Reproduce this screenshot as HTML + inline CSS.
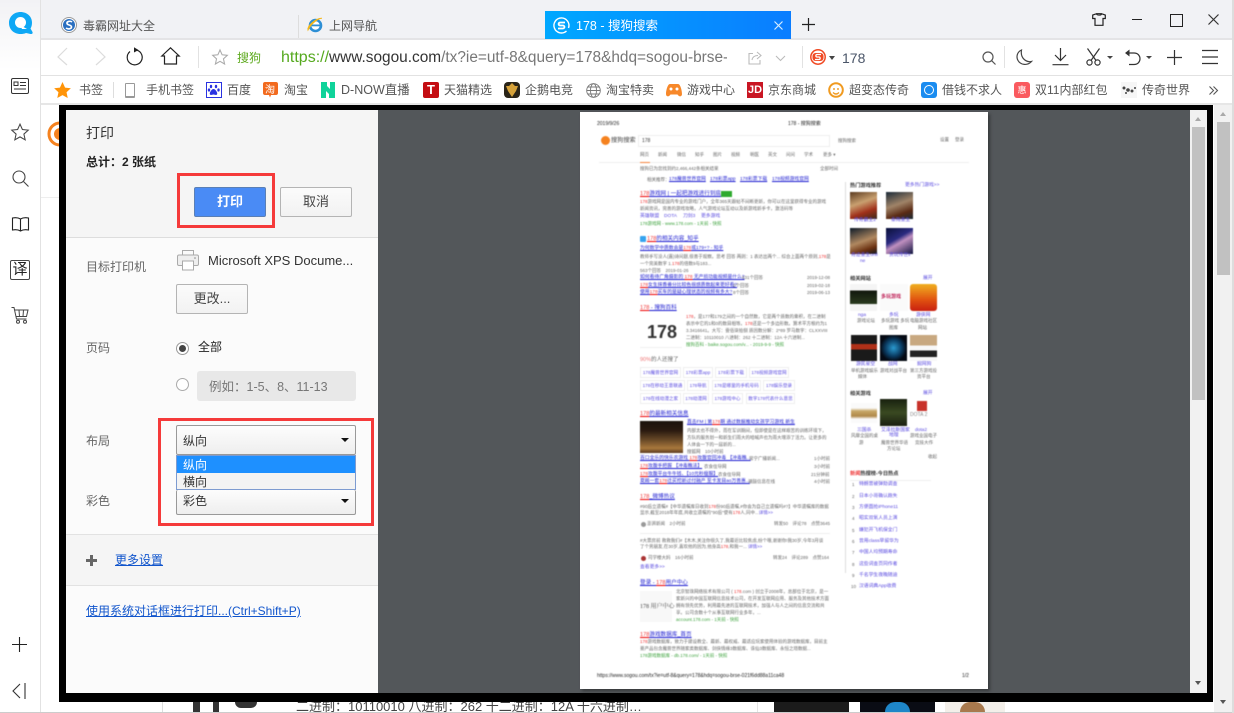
<!DOCTYPE html>
<html lang="zh"><head><meta charset="utf-8"><title>178 - 搜狗搜索</title>
<style>
html,body{margin:0;padding:0;width:1234px;height:713px;overflow:hidden;background:#fff}
body{position:relative;font-family:"Liberation Sans","Noto Sans CJK SC",sans-serif;color:#333}
.a{position:absolute}
.t{position:absolute;line-height:0;white-space:nowrap}
svg{position:absolute;overflow:visible}
.b{font-size:12px;color:#555}
.btn{position:absolute;box-sizing:border-box;background:linear-gradient(#fbfbfb,#f2f2f2);border:1px solid #b4b4b4;border-radius:2px;font-size:13px;color:#444;text-align:center}
.sel{position:absolute;box-sizing:border-box;left:176px;width:180px;background:linear-gradient(#fdfdfd,#eee);border:1px solid #999;border-radius:2px}
.l{font-size:12px;color:#666}
#m{position:absolute;left:0;top:0;width:1234px;height:713px;filter:blur(.45px);overflow:hidden;pointer-events:none}
#m .t{font-size:4.500px;color:#666}
#m .h{font-size:5.600px;color:#1a1ad0;text-decoration:underline;text-decoration-thickness:1px;text-underline-offset:1px}
#m .h i{color:#e33;font-style:normal;text-decoration:underline;text-decoration-color:#e00;text-decoration-thickness:1px;text-underline-offset:1px}
#m .g{color:#3fa33f}
#m .k{font-size:4.800px;color:#5b4ce0}
#m .s{font-size:5.200px;color:#333;font-weight:bold}
#m .c{position:absolute;box-sizing:border-box;border:1px solid #eee;background:#fff;height:11px;line-height:9px;font-size:4.600px;color:#5b4ce0;text-align:center;white-space:nowrap}
</style></head><body>

<!-- chrome backgrounds -->
<div class="a" style="left:0;top:0;width:1234px;height:38px;background:#f1f2f5"></div>
<div class="a" style="left:0;top:38px;width:1234px;height:2px;background:#e4e4e6"></div>
<div class="a" style="left:0;top:75px;width:1234px;height:1px;background:#e2e2e2"></div>
<div class="a" style="left:0;top:103px;width:1234px;height:2px;background:#e6e6e6"></div>
<div class="a" style="left:0;top:0;width:40px;height:713px;background:linear-gradient(#f2f2f5 0,#fff 70px)"></div>
<div class="a" style="left:40px;top:0;width:1px;height:713px;background:#e2e2e2"></div>
<div class="a" style="left:41px;top:197px;width:18px;height:1px;background:#eee"></div>
<div class="a" style="left:0;top:712px;width:1234px;height:1px;background:#ccc"></div>
<div class="a" style="left:1232px;top:0;width:2px;height:713px;background:#ddd"></div>

<!-- app logo -->
<svg style="left:8px;top:11px" width="26" height="24" viewBox="0 0 26 24"><path d="M12.500 1C19 1 24 5.500 24 11.500C24 14 23.500 16 22.500 17.500L24.500 21C25 22.500 24 23.300 22.500 23L18 22C16.500 22.700 14.500 23 12.500 23C5.500 23 1 18 1 12C1 5.500 6 1 12.500 1Z" fill="#0fa8f5"/><circle cx="12.500" cy="11.500" r="5.500" fill="#fff"/><path d="M12 14L19 18L14 18Z" fill="#fff"/></svg>

<!-- tabs -->
<svg style="left:61px;top:17px" width="16" height="16" viewBox="0 0 16 16"><circle cx="8" cy="8" r="7.500" fill="#fff" stroke="#999"/><circle cx="8" cy="8" r="6" fill="#2a6fc0"/><path d="M11 5C9 3.500 5.500 4.500 6 6.500C6.500 8.500 10.500 7.500 10.500 10C10.500 12 7 12.500 5 11" fill="none" stroke="#fff" stroke-width="1.600"/></svg>
<div class="t" style="left:83px;top:26px;font-size:12px;letter-spacing:0;color:#555">毒霸网址大全</div>
<div class="a" style="left:298px;top:15px;width:1px;height:23px;background:#ddd"></div>
<svg style="left:307px;top:17px" width="17" height="16" viewBox="0 0 17 16"><circle cx="8.500" cy="8.500" r="5.500" fill="#fff" stroke="#2d8fd5" stroke-width="2.600"/><rect x="4" y="7.500" width="9" height="1.800" fill="#2d8fd5"/><path d="M1 13C0 9 9 1 15 1.200C11 1 4 7 1 13Z" fill="#f3b71c" stroke="#f3b71c"/></svg>
<div class="t" style="left:329px;top:26px;font-size:12px;color:#555">上网导航</div>
<div class="a" style="left:545px;top:11px;width:246px;height:28px;background:linear-gradient(90deg,#00a8ff,#0a7dff)"></div>
<svg style="left:553px;top:17px" width="17" height="17" viewBox="0 0 17 17"><path d="M13.500 14A7.500 7.500 0 1 1 15.500 11" fill="none" stroke="#fff" stroke-width="1.400"/><path d="M12 5.500H7.500C5 5.500 5 8.500 7.500 8.500H9.800C12 8.500 12 11.500 9.800 11.500H5" fill="none" stroke="#fff" stroke-width="1.800"/></svg>
<div class="t" style="left:576px;top:26px;font-size:12.500px;color:#fff">178 - 搜狗搜索</div>
<svg style="left:773px;top:20px" width="11" height="11"><path d="M1.500 1.500L9.500 9.500M9.500 1.500L1.500 9.500" stroke="#d5ecff" stroke-width="1.200"/></svg>
<svg style="left:802px;top:18px" width="13" height="13"><path d="M6.500 0V13M0 6.500H13" stroke="#222" stroke-width="1.200"/></svg>

<svg style="left:1092px;top:13px" width="14" height="13" viewBox="0 0 14 13"><path d="M4.500 .7H9.500C9.500 2.500 4.500 2.500 4.500 .7ZM4.500 .7L.7 2V5.500H3V12.300H11V5.500H13.300V2L9.500 .7" fill="none" stroke="#222" stroke-width="1.200"/></svg>
<div class="a" style="left:1132px;top:19px;width:10px;height:1px;background:#222"></div>
<div class="a" style="left:1170px;top:14px;width:11px;height:11px;border:1.300px solid #222;box-sizing:content-box"></div>
<svg style="left:1208px;top:14px" width="11" height="11"><path d="M.5 .5L10.500 10.500M10.500 .5L.5 10.500" stroke="#333" stroke-width="1.200"/></svg>

<!-- toolbar -->
<svg style="left:57px;top:47px" width="50" height="20" fill="none" stroke="#dcdcdc" stroke-width="1.200"><path d="M10 1L1 10L10 18"/><path d="M39 1L48 10L39 18"/></svg>
<svg style="left:126px;top:47px" width="18" height="19" viewBox="0 0 18 19" fill="none"><path d="M11 3.200A7.500 7.500 0 1 1 4 4.500" stroke="#222" stroke-width="1.200"/><path d="M8 .3L12.500 3L8 5.500Z" fill="#222"/></svg>
<svg style="left:161px;top:47px" width="19" height="18" fill="none" stroke="#222" stroke-width="1.200"><path d="M.8 9L9.500 .8L18.200 9H15.500V17H3.500V9Z"/></svg>
<div class="a" style="left:198px;top:46px;width:1px;height:22px;background:#e2e2e2"></div>
<svg style="left:212px;top:49px" width="16" height="16" viewBox="0 0 24 24"><path d="M12 1.500L15.200 8.700L23 9.500L17.200 14.800L18.900 22.500L12 18.500L5.100 22.500L6.800 14.800L1 9.500L8.800 8.700Z" fill="none" stroke="#aaa" stroke-width="1.600"/></svg>
<div class="t" style="left:237px;top:58px;font-size:12px;color:#5eaa1f">搜狗</div>
<div class="a" style="left:281px;top:46px;width:446px;height:24px;overflow:hidden"><div class="t" style="left:0;top:12px;font-size:15.400px;color:#777"><span style="color:#55a91e;font-size:16px">https://</span><span style="color:#333">www.sogou.com</span>/tx?ie=utf-8&amp;query=178&amp;hdq=sogou-brse-021f6dd88a11ca48</div></div>
<svg style="left:748px;top:51px" width="14" height="14" fill="none" stroke="#bbb" stroke-width="1.100"><path d="M5 2.500H1V13H12V9"/><path d="M4 9C4.500 6 7 4.500 10 4.500M9 1L13 4.500L9 8"/></svg>
<svg style="left:775px;top:55px" width="11" height="7" fill="none" stroke="#bbb" stroke-width="1.100"><path d="M1 1L5.500 5.500L10 1"/></svg>
<div class="a" style="left:802px;top:46px;width:1px;height:22px;background:#e2e2e2"></div>
<svg style="left:810px;top:49px" width="16" height="16" viewBox="0 0 16 16"><circle cx="8" cy="8" r="7.200" fill="none" stroke="#f04a24" stroke-width="1.500"/><rect x="2.500" y="4" width="11" height="8" rx="3" fill="#f04a24"/><path d="M11 5.500H7C5.500 5.500 5.500 8 7 8H9C10.500 8 10.500 10.500 9 10.500H5" fill="none" stroke="#fff" stroke-width="1.300"/></svg>
<div class="a" style="left:829px;top:56px;border:3.500px solid transparent;border-top:4px solid #444;border-bottom:0"></div>
<div class="t" style="left:842px;top:58px;font-size:14px;color:#4a5568">178</div>
<svg style="left:982px;top:51px" width="14" height="14" fill="none" stroke="#555" stroke-width="1.200"><circle cx="6" cy="6" r="5"/><path d="M9.800 9.800L13.500 13.500"/></svg>
<div class="a" style="left:1004px;top:46px;width:1px;height:22px;background:#e2e2e2"></div>
<svg style="left:1016px;top:49px" width="16" height="17" viewBox="0 0 16 17" fill="none" stroke="#444" stroke-width="1.200"><path d="M5.500 1C1 3 0 8 2 11.500C4.500 16 11.500 17 15.500 12.500C11 13.500 4 10 5.500 1Z"/></svg>
<svg style="left:1052px;top:48px" width="17" height="18" fill="none" stroke="#333" stroke-width="1.200"><path d="M8.500 0V12M3 7L8.500 12.500L14 7M.5 16.700H16.500"/></svg>
<svg style="left:1086px;top:48px" width="15" height="18" fill="none" stroke="#333" stroke-width="1.200"><circle cx="3.500" cy="14.500" r="2.600"/><circle cx="11.500" cy="14.500" r="2.600"/><path d="M1.500 .5L10 12.500M13.500 .5L5 12.500"/></svg>
<div class="a" style="left:1107px;top:56px;border:3px solid transparent;border-top:3.500px solid #444;border-bottom:0"></div>
<svg style="left:1124px;top:48px" width="18" height="18" fill="none" stroke="#333" stroke-width="1.200"><path d="M3 5H10C18 5 18 16.500 10 16.500H5"/><path d="M5.500 1.500L1 5L5.500 8.500Z" fill="#333" stroke="none"/></svg>
<div class="a" style="left:1146px;top:56px;border:3px solid transparent;border-top:3.500px solid #444;border-bottom:0"></div>
<svg style="left:1167px;top:50px" width="15" height="15" stroke="#333" stroke-width="1.200"><path d="M7.500 0V15M0 7.500H15"/></svg>
<svg style="left:1202px;top:50px" width="16" height="14" stroke="#333" stroke-width="1.200"><path d="M0 .5H16M0 7H16M0 13.500H16"/></svg>

<!-- bookmarks -->
<svg style="left:54px;top:82px" width="17" height="16" viewBox="0 0 24 23"><path d="M12 0L15.700 8L24 8.900L17.800 14.700L19.500 23L12 18.800L4.500 23L6.200 14.700L0 8.900L8.300 8Z" fill="#ff9408"/></svg>
<div class="t b" style="left:79px;top:90px">书签</div>
<div class="a" style="left:113px;top:82px;width:1px;height:16px;background:#ddd"></div>
<div class="a" style="left:125px;top:83px;width:10px;height:15px;box-sizing:border-box;border:1.500px solid #999;border-radius:1px;border-bottom-width:2px"></div>
<div class="t b" style="left:146px;top:90px">手机书签</div>
<svg style="left:206px;top:82px" width="16" height="16" viewBox="0 0 16 16"><rect x=".5" y=".5" width="15" height="15" fill="#fff" stroke="#2932e1"/><g fill="#2932e1"><ellipse cx="5" cy="4.500" rx="1.200" ry="1.700"/><ellipse cx="10" cy="4.500" rx="1.200" ry="1.700"/><ellipse cx="3" cy="8" rx="1.200" ry="1.600"/><ellipse cx="12.500" cy="8" rx="1.200" ry="1.600"/><path d="M7.500 7C9.500 7 12 11 11 12.500C10 13.500 9 12.500 7.500 12.500C6 12.500 5 13.500 4 12.500C3 11 5.500 7 7.500 7Z"/></g></svg>
<div class="t b" style="left:227px;top:90px">百度</div>
<svg style="left:263px;top:82px" width="15" height="16"><path d="M2 0H13C14.200 0 15 .8 15 2V11C15 12.200 14.200 13 13 13H8L7 15.500L6 13H2C.8 13 0 12.200 0 11V2C0 .8 .8 0 2 0Z" fill="#f26a1e"/><text x="2" y="11" font-size="10" fill="#fff">淘</text></svg>
<div class="t b" style="left:284px;top:90px">淘宝</div>
<svg style="left:321px;top:82px" width="14" height="16"><path d="M0 0H6V4L9 7V0H14V16H8V12L5 9V16H0Z" fill="#10d39a"/></svg>
<div class="t b" style="left:341px;top:90px;font-size:12.500px">D-NOW直播</div>
<div class="a" style="left:423px;top:82px;width:16px;height:16px;background:#c40d12;border-radius:2px;color:#fff;font:bold 13px/16px 'Liberation Sans';text-align:center">T</div>
<div class="t b" style="left:444px;top:90px">天猫精选</div>
<div class="a" style="left:504px;top:82px;width:16px;height:16px;background:#2a2418;border-radius:4px"></div>
<svg style="left:506px;top:83px" width="12" height="14"><path d="M6 0L9 3L12 3L10 8L6 14L2 8L0 3L3 3Z" fill="#d6a23a"/></svg>
<div class="t b" style="left:525px;top:90px">企鹅电竞</div>
<svg style="left:586px;top:83px" width="15" height="15" fill="none" stroke="#777" stroke-width=".9"><circle cx="7.500" cy="7.500" r="6.800"/><ellipse cx="7.500" cy="7.500" rx="3" ry="6.800"/><path d="M.7 7.500H14.300M1.800 4H13.200M1.800 11H13.200"/></svg>
<div class="t b" style="left:606px;top:90px">淘宝特卖</div>
<svg style="left:666px;top:83px" width="16" height="14"><path d="M4 1H12C14.500 1 16 8 16 11C16 14 13 14 11.500 11.500H4.500C3 14 0 14 0 11C0 8 1.500 1 4 1Z" fill="#f7882a"/><circle cx="5" cy="6" r="1.500" fill="#fff"/><circle cx="11" cy="6" r="1.500" fill="#fff"/></svg>
<div class="t b" style="left:687px;top:90px">游戏中心</div>
<div class="a" style="left:747px;top:82px;width:16px;height:16px;background:#c91623;color:#fff;font:bold 11px/16px 'Liberation Sans';text-align:center">JD</div>
<div class="t b" style="left:768px;top:90px">京东商城</div>
<svg style="left:828px;top:82px" width="16" height="16" fill="none" stroke="#f09a20" stroke-width="2"><circle cx="8" cy="8" r="6.800"/><path d="M6 6V8M10 6V8M5 10.500C7 12.500 9 12.500 11 10.500" stroke-width="1.400"/></svg>
<div class="t b" style="left:849px;top:90px">超变态传奇</div>
<div class="a" style="left:921px;top:82px;width:16px;height:16px;background:#1a8cf0;border-radius:3px"></div>
<div class="a" style="left:924px;top:85px;width:8px;height:8px;border:1.500px solid #fff;border-radius:50%"></div>
<div class="t b" style="left:942px;top:90px">借钱不求人</div>
<div class="a" style="left:1014px;top:82px;width:16px;height:16px;background:#fa5a5f;border-radius:3px;color:#fff;font-size:9px;line-height:16px;text-align:center">惠</div>
<div class="t b" style="left:1035px;top:90px;font-size:12px">双11内部红包</div>
<div class="a" style="left:1121px;top:82px;width:16px;height:16px;background:#f6f6f6"></div>
<svg style="left:1122px;top:85px" width="14" height="10" fill="#444"><circle cx="2" cy="3" r="1.500"/><circle cx="6" cy="5" r="1.800"/><circle cx="10" cy="6" r="1.500"/><circle cx="13" cy="3" r="1"/><circle cx="4" cy="8" r="1"/></svg>
<div class="t b" style="left:1142px;top:90px">传奇世界</div>
<svg style="left:1209px;top:86px" width="9" height="9" fill="none" stroke="#555" stroke-width="1.100"><path d="M.5 .5L4.500 4.500L.5 8.500M4.500 .5L8.500 4.500L4.500 8.500"/></svg>

<!-- sidebar -->
<svg style="left:11px;top:78px" width="18" height="16" fill="none" stroke="#333" stroke-width="1"><rect x=".5" y=".5" width="17" height="15" rx="1.500"/><rect x="3" y="4" width="4" height="3.500"/><path d="M9 4.500H15M9 7.500H15M3 11H15"/></svg>
<svg style="left:11px;top:123px" width="18" height="18" viewBox="0 0 24 24"><path d="M12 1.500L15.200 8.700L23 9.500L17.200 14.800L18.900 22.500L12 18.500L5.100 22.500L6.800 14.800L1 9.500L8.800 8.700Z" fill="none" stroke="#444" stroke-width="1.400"/></svg>
<svg style="left:12px;top:170px" width="17" height="17" fill="none" stroke="#444" stroke-width="1.100"><circle cx="7" cy="7" r="6"/><path d="M11.500 11.500L16.500 16.500"/></svg>
<svg style="left:12px;top:217px" width="17" height="15" fill="none" stroke="#222" stroke-width="1.100"><path d="M8.500 2C6 .5 3 .5 .5 1V13C3 12.500 6 12.500 8.500 14C11 12.500 14 12.500 16.500 13V1C14 .5 11 .5 8.500 2V14"/></svg>
<div class="a" style="left:10px;top:260px;width:20px;height:20px;box-sizing:border-box;border:1px solid #444;border-radius:2px;font-size:15px;line-height:17px;text-align:center;color:#222">译</div>
<svg style="left:11px;top:307px" width="18" height="17" fill="none" stroke="#444" stroke-width="1"><path d="M.5 .5H3L5.500 12H15.500M3.500 3H17L15.500 9.500H4.800M8 3L8.500 9.500M12.500 3L12 9.500"/><circle cx="7" cy="14.800" r="1.500"/><circle cx="14" cy="14.800" r="1.500"/></svg>
<svg style="left:12px;top:637px" width="15" height="15" stroke="#222" stroke-width="1.100"><path d="M7.500 0V15M0 7.500H15"/></svg>
<svg style="left:12px;top:683px" width="14" height="16" fill="none" stroke="#333" stroke-width="1.100"><path d="M8 1L1 8L8 15M13 0V16"/></svg>

<!-- page behind -->
<svg style="left:49px;top:122px" width="10" height="24"><path d="M11 1A11 11 0 0 0 11 23" fill="none" stroke="#f5821f" stroke-width="3"/><circle cx="11" cy="12" r="6" fill="#f5821f"/></svg>
<div class="a" style="left:162px;top:702px;width:1px;height:10px;background:#ddd"></div>
<div class="t" style="left:296px;top:707px;font-size:13px;color:#444">二进制：10110010 八进制：262 十二进制：12A 十六进制…</div>
<div class="a" style="left:193px;top:702px;width:7px;height:10px;background:#333"></div>
<div class="a" style="left:213px;top:702px;width:6px;height:10px;background:#333"></div>
<div class="a" style="left:235px;top:702px;width:22px;height:6px;background:#333;border-radius:0 0 11px 11px"></div>
<div class="a" style="left:757px;top:702px;width:1px;height:10px;background:#e5e5e5"></div>
<div class="a" style="left:774px;top:702px;width:75px;height:10px;background:#1b1b1b"></div>
<div class="a" style="left:860px;top:702px;width:75px;height:10px;background:#0a0c14"></div>
<div class="a" style="left:885px;top:702px;width:25px;height:10px;border-radius:12px 12px 0 0;background:#1e86c8"></div>
<div class="a" style="left:945px;top:702px;width:60px;height:10px;background:#f3efe9"></div>
<div class="a" style="left:960px;top:702px;width:25px;height:10px;background:#a8794d;border-radius:14px 14px 0 0"></div>
<!-- main scrollbar -->
<div class="a" style="left:1214px;top:105px;width:18px;height:607px;background:#f1f1f1"></div>
<div class="a" style="left:1217px;top:122px;width:13px;height:153px;background:#c1c1c1"></div>
<div class="a" style="left:1220px;top:112px;border:3.500px solid transparent;border-bottom:4px solid #a9a9a9;border-top:0"></div>
<div class="a" style="left:1220px;top:700px;border:3.500px solid transparent;border-top:4px solid #555;border-bottom:0"></div>

<!-- black frame -->
<div class="a" style="left:59px;top:105px;width:1154px;height:597px;background:#000"></div>
<div class="a" style="left:66px;top:110px;width:1141px;height:583px;background:#53575a"></div>

<!-- print panel -->
<div class="a" style="left:66px;top:110px;width:312px;height:583px;background:#fbfbfb"></div>
<div class="a" style="left:66px;top:110px;width:312px;height:127px;background:#f5f5f5"></div>
<div class="a" style="left:66px;top:237px;width:312px;height:1px;background:#ddd"></div>
<div class="a" style="left:66px;top:534px;width:312px;height:52px;background:#f5f5f5;border-top:1px solid #e2e2e2;border-bottom:1px solid #e2e2e2;box-sizing:border-box"></div>
<div class="t" style="left:86px;top:133px;font-size:14px;color:#333">打印</div>
<div class="t" style="left:86px;top:162px;font-size:12px;color:#222;font-weight:bold">总计：2 张纸</div>
<div class="a" style="left:177px;top:173px;width:98px;height:55px;box-sizing:border-box;border:3px solid #f53a3a"></div>
<div class="btn" style="left:194px;top:187px;width:72px;height:30px;background:#4a8bf5;border-color:#5a7fb5;color:#fff;font-weight:bold;line-height:27px">打印</div>
<div class="btn" style="left:280px;top:187px;width:72px;height:30px;line-height:27px">取消</div>
<div class="t l" style="left:86px;top:267px">目标打印机</div>
<svg style="left:177px;top:250px" width="23" height="21" fill="#fafafa" stroke="#aaa"><path d="M5.500 5V.5H16.500V5" /><rect x=".5" y="5" width="21" height="10.500" rx="1.500" fill="#eee"/><rect x="5.500" y="11" width="11" height="9" fill="#fff"/><circle cx="18" cy="8" r=".8" fill="#888" stroke="none"/></svg>
<div class="t" style="left:208px;top:261px;font-size:13px;color:#333">Microsoft XPS Docume...</div>
<div class="btn" style="left:176px;top:284px;width:72px;height:30px;line-height:28px">更改...</div>
<div class="t l" style="left:86px;top:348px">页码</div>
<div class="a" style="left:176px;top:342px;width:13px;height:13px;box-sizing:border-box;border:1px solid #999;border-radius:50%;background:#fff"></div>
<div class="a" style="left:179px;top:345px;width:7px;height:7px;border-radius:50%;background:#444"></div>
<div class="t" style="left:198px;top:347px;font-size:12px;color:#222">全部</div>
<div class="a" style="left:176px;top:378px;width:13px;height:13px;box-sizing:border-box;border:1px solid #aaa;border-radius:50%;background:#fff"></div>
<div class="a" style="left:197px;top:371px;width:159px;height:30px;border-radius:3px;background:#e8e8e8"></div>
<div class="t" style="left:209px;top:387px;font-size:12.500px;color:#777">例如：1-5、8、11-13</div>
<div class="t l" style="left:86px;top:441px">布局</div>
<div class="t l" style="left:86px;top:501px">彩色</div>
<div class="a" style="left:158px;top:418px;width:216px;height:108px;box-sizing:border-box;border:3px solid #f53a3a"></div>
<div class="sel" style="top:425px;height:30px"></div>
<div class="t" style="left:183px;top:441px;font-size:12px;color:#333">纵向</div>
<div class="a" style="left:341px;top:438px;border:4px solid transparent;border-top:4.500px solid #111;border-bottom:0"></div>
<div class="sel" style="top:490px;height:25px;border-top:0"></div>
<div class="t" style="left:183px;top:501px;font-size:12px;color:#333">彩色</div>
<div class="a" style="left:341px;top:499px;border:4px solid transparent;border-top:4.500px solid #111;border-bottom:0"></div>
<div class="a" style="left:176px;top:455px;width:180px;height:35px;box-sizing:border-box;border:1px solid #7d9bd0;background:#f3f3f3"></div>
<div class="a" style="left:177px;top:456px;width:178px;height:17px;background:#1e90ff"></div>
<div class="t" style="left:183px;top:465px;font-size:12px;color:#fff">纵向</div>
<div class="t" style="left:183px;top:482px;font-size:12px;color:#333">横向</div>
<svg style="left:86px;top:555px" width="11" height="11" fill="#666"><path d="M4 0H7V4H11V7H7V11H4V7H0V4H4Z"/></svg>
<div class="t" style="left:115px;top:560px;font-size:12px;color:#1155cc;text-decoration:underline">更多设置</div>
<div class="t" style="left:86px;top:611px;font-size:12px;color:#1155cc;text-decoration:underline">使用系统对话框进行打印...(Ctrl+Shift+P)</div>

<!-- preview scrollbar -->
<div class="a" style="left:1190px;top:110px;width:17px;height:583px;background:#f1f1f1"></div>
<div class="a" style="left:1192px;top:127px;width:13px;height:273px;background:#c1c1c1"></div>
<div class="a" style="left:1195px;top:117px;border:3.500px solid transparent;border-bottom:4px solid #a9a9a9;border-top:0"></div>
<div class="a" style="left:1195px;top:681px;border:3.500px solid transparent;border-top:4px solid #555;border-bottom:0"></div>

<!-- preview page -->
<div class="a" style="left:580px;top:112px;width:408px;height:577px;background:#fff;box-shadow:2px 2px 3px rgba(0,0,0,.35)"></div>
<div id="m">
<div class="t" style="left:597px;top:124px;font-size:5px;color:#222">2019/9/26</div>
<div class="t" style="left:788px;top:124px;font-size:5px;color:#222">178 - 搜狗搜索</div>
<div class="a" style="left:601px;top:136px;width:9px;height:9px;border-radius:50%;background:#f5821f"></div>
<div class="t" style="left:611px;top:141px;font-size:6.200px;color:#444">搜狗搜索</div>
<div class="a" style="left:638px;top:135px;width:192px;height:12px;box-sizing:border-box;border:1px solid #eee"></div>
<div class="t" style="left:642px;top:141px;font-size:5px;color:#333">178</div>
<div class="t" style="left:838px;top:141px">搜狗搜索</div>
<div class="t" style="left:940px;top:140px">设置</div><div class="t" style="left:955px;top:140px">登录</div>
<div class="t" style="left:640px;top:155px">网页</div><div class="t" style="left:658px;top:155px">新闻</div><div class="t" style="left:677px;top:155px">微信</div><div class="t" style="left:695px;top:155px">知乎</div><div class="t" style="left:713px;top:155px">图片</div><div class="t" style="left:731px;top:155px">视频</div><div class="t" style="left:750px;top:155px">明医</div><div class="t" style="left:768px;top:155px">英文</div><div class="t" style="left:786px;top:155px">问问</div><div class="t" style="left:804px;top:155px">学术</div><div class="t" style="left:823px;top:155px">更多 ▾</div>
<div class="a" style="left:599px;top:162px;width:370px;height:1px;background:#eee"></div>
<div class="a" style="left:640px;top:162px;width:10px;height:1px;background:#f5823c"></div>
<div class="t" style="left:640px;top:169px">搜狗已为您找到约2,466,442条相关结果</div>
<div class="t" style="left:820px;top:169px">全部时间</div>
<div class="t" style="left:647px;top:180px">相关推荐：</div>
<div class="t h" style="left:669px;top:180px;font-size:4.800px">178魔兽世界官网</div>
<div class="t h" style="left:710px;top:180px;font-size:4.800px">178彩票app</div>
<div class="t h" style="left:740px;top:180px;font-size:4.800px">178彩票下载</div>
<div class="t h" style="left:772px;top:180px;font-size:4.800px">178视频游戏官网</div>
<div class="a" style="left:845px;top:182px;width:1px;height:391px;background:#ddd"></div>

<div class="t h" style="left:640px;top:194px"><i>178</i>游戏网 | 一起把游戏进行到底</div>
<div class="a" style="left:721px;top:191px;width:11px;height:6px;background:#2eaa2e"></div>
<div class="t" style="left:640px;top:202px"><span style="color:#e33">178</span>游戏网是国内专业的游戏门户，全年365天跟帖不间断更新，你可以在这里获得专业的游戏</div>
<div class="t" style="left:640px;top:209px">新闻资讯，完善的游戏攻略，人气游戏论坛互动以及新游戏新手卡，激活码等</div>
<div class="t k" style="left:640px;top:217px">英雄联盟</div><div class="t k" style="left:664px;top:217px">DOTA</div><div class="t k" style="left:683px;top:217px">刀剑3</div><div class="t k" style="left:701px;top:217px">更多游戏</div>
<div class="t g" style="left:640px;top:224px">178游戏网 - www.178.com - 1天前 - 快照</div>

<div class="a" style="left:640px;top:236px;width:6px;height:6px;background:#35a3ef;border-radius:1px"></div>
<div class="t h" style="left:647px;top:239px"><i>178</i>的相关内容_知乎</div>
<div class="t h" style="left:640px;top:249px;font-size:4.800px">为何数学中质数会是<i>178</i>或179+? - 知乎</div>
<div class="t" style="left:640px;top:257px">教师手写没人(嘉)诗问题,很善于观察。思考 回答 两则：1 表达出两个... 综合上面两个原则,<span style="color:#e33">178</span>是</div>
<div class="t" style="left:640px;top:264px">一个完美数字 1.<span style="color:#e33">178</span>的倍数9与183...</div>
<div class="t" style="left:640px;top:271px">563个回答　2019-01-26</div>
<div class="t h" style="left:640px;top:278px;font-size:4.800px">如何看待广角摄影的 <i>178</i> 无产损功能视频是什么?</div><div class="t" style="left:742px;top:278px">631个回答</div><div class="t" style="left:807px;top:278px">2019-12-08</div>
<div class="t h" style="left:640px;top:286px;font-size:4.800px"><i>178</i>女生抹香番分比较色很感质数起来更好看?</div><div class="t" style="left:733px;top:286px">2个回答</div><div class="t" style="left:807px;top:286px">2019-02-18</div>
<div class="t h" style="left:640px;top:293px;font-size:4.800px">使用<i>178</i>买车的是疑心理状态的视频有多大?</div><div class="t" style="left:733px;top:293px">8个回答</div><div class="t" style="left:807px;top:293px">2019-06-13</div>

<div class="t h" style="left:640px;top:308px"><i>178</i> - 搜狗百科</div>
<div class="t" style="left:647px;top:332px;font-size:18px;font-weight:bold;color:#333">178</div>
<div class="a" style="left:640px;top:347px;width:42px;height:1px;background:#f0f0f0"></div>
<div class="t" style="left:686px;top:317px"><span style="color:#e33">178</span>，是177和179之间的一个自然数，它是两个质数的乘积，在二进制</div>
<div class="t" style="left:686px;top:324px">表示中它的1和0的数目相等。<span style="color:#e33">178</span>还是一个多边形数。算术平方根约为1</div>
<div class="t" style="left:686px;top:331px">3.3416641。大写：壹佰柒拾捌 质因数分解：2*89 罗马数字：CLXXVIII</div>
<div class="t" style="left:686px;top:338px">二进制：10110010 八进制：262 十二进制：12A 十六进制...</div>
<div class="t g" style="left:686px;top:345px">搜狗百科 - baike.sogou.com/v... - 2019-9-9 - 快照</div>

<div class="t" style="left:640px;top:360px;font-size:5.500px"><span style="color:#e77">90%</span>的人还搜了</div>
<div class="c" style="left:640px;top:367px;width:41px">178魔兽世界官网</div><div class="c" style="left:683px;top:367px;width:30px">178彩票app</div><div class="c" style="left:715px;top:367px;width:32px">178彩票下载</div><div class="c" style="left:749px;top:367px;width:40px">178视频游戏官网</div>
<div class="c" style="left:640px;top:380px;width:45px">178在移动王意联通</div><div class="c" style="left:687px;top:380px;width:22px">178导航</div><div class="c" style="left:712px;top:380px;width:49px">178是哪里的手机号码</div><div class="c" style="left:763px;top:380px;width:32px">178娱乐登录</div>
<div class="c" style="left:640px;top:393px;width:41px">178在线动漫之家</div><div class="c" style="left:683px;top:393px;width:26px">178动漫网</div><div class="c" style="left:712px;top:393px;width:31px">178游戏中心</div><div class="c" style="left:746px;top:393px;width:49px">数字178代表什么意思</div>

<div class="t h" style="left:640px;top:414px"><i>178</i>的最新相关信息</div>
<div class="a" style="left:640px;top:421px;width:43px;height:32px;background:linear-gradient(180deg,#1a120c 0,#2a1a10 30%,#6a4a28 60%,#a8783c 85%,#5a3a20 100%)"></div>
<div class="t h" style="left:687px;top:423px;font-size:4.800px">直击FM | 第<i>178</i>期 通过数据推动女孩学习游戏 新生</div>
<div class="t" style="left:687px;top:431px">内部太也不得外，而在军训期间，但即使是在这样艰苦的训练环境下，</div>
<div class="t" style="left:687px;top:438px">方队的服务划一和新生们雨大的哈喊声也为雨大增添了活力。让更多的</div>
<div class="t" style="left:687px;top:445px">人体会一下的一届新的...</div>
<div class="t" style="left:687px;top:452px">搜狐网　10小时前</div>
<div class="t h" style="left:640px;top:459px;font-size:4.800px">百口全乐的快乐农游戏 <i>178</i>攻腹官回冲毒 【冲毒瞧...</div><div class="t" style="left:749px;top:459px">常宁广播新闻...</div><div class="t" style="left:814px;top:459px">1小时前</div>
<div class="t h" style="left:640px;top:467px;font-size:4.800px"><i>178</i>攻腹手把握 【冲毒瞧法】</div><div class="t" style="left:704px;top:467px">衣食住导网</div><div class="t" style="left:814px;top:467px">3小时前</div>
<div class="t h" style="left:640px;top:475px;font-size:4.800px"><i>178</i>攻腹平台牛牛钱、【10元秒瘦服】</div><div class="t" style="left:718px;top:475px">衣食住导网</div><div class="t" style="left:811px;top:475px">21分钟前</div>
<div class="t h" style="left:640px;top:482px;font-size:4.800px">夏踢一套<i>178</i>迁买挖新过付融产 至卡发目ao万善惠...</div><div class="t" style="left:748px;top:482px">潮鼓信息在线</div><div class="t" style="left:814px;top:482px">4小时前</div>

<div class="t h" style="left:640px;top:497px"><i>178</i>_微博热议</div>
<div class="t" style="left:640px;top:507px">#90后立遗嘱#【中华遗嘱库日收到<span style="color:#e33">178</span>份90后遗嘱,#你会为自己立遗嘱吗#?】中华遗嘱库的数据</div>
<div class="t" style="left:640px;top:513px">显示,截至2018年年底,共收立遗嘱的"90后"使有<span style="color:#e33">178</span>人,同中...<span style="color:#5b4ce0">详情&gt;&gt;</span></div>
<div class="a" style="left:641px;top:522px;width:5px;height:5px;border-radius:50%;background:#999"></div>
<div class="t" style="left:647px;top:524px">澎湃新闻　2小时前</div><div class="t" style="left:774px;top:524px">转发50　评论78　点赞3645</div>
<div class="a" style="left:640px;top:533px;width:190px;height:1px;background:#eee"></div>
<div class="t" style="left:640px;top:541px">#大票房前 救救我们#【木木,关注你很久了,我最近比较焦虑,纷个哦,谢谢你!我30岁,今年3月谈</div>
<div class="t" style="left:640px;top:547px">了个男朋友,在30岁,喜欢他的因为,他身高<span style="color:#e33">178</span>,和我一... <span style="color:#5b4ce0">详情&gt;&gt;</span></div>
<div class="a" style="left:641px;top:556px;width:5px;height:5px;border-radius:50%;background:#a33"></div>
<div class="t" style="left:648px;top:558px">司学楼大妈　16小时前</div><div class="t" style="left:773px;top:558px">转发24　评论289　点赞164</div>
<div class="t k" style="left:640px;top:568px">查看更多&gt;&gt;</div>
<div class="t h" style="left:640px;top:583px">登录 - <i>178</i>用户中心</div>
<div class="a" style="left:640px;top:591px;width:32px;height:31px;background:#f8f8f8"></div>
<div class="t" style="left:640px;top:607px;font-size:6px;color:#444;font-family:'Liberation Serif','Noto Serif CJK SC',serif">178 用户中心</div>
<div class="t" style="left:676px;top:592px">北京智珠网络技术有限公司 ( <span style="color:#e33">178</span>.com ) 创立于2008年，总部位于北京，是一</div>
<div class="t" style="left:676px;top:599px">家新兴的中国互联网信息技术公司，在开发互联网应用、服务及其他技术方面</div>
<div class="t" style="left:676px;top:606px">拥有领先优势，利用最先进的互联网技术，加强人与人之间的信息交流和共</div>
<div class="t" style="left:676px;top:613px">享。公司含数十个从事互联网行业多年，...</div>
<div class="t g" style="left:676px;top:620px">account.178.com - 1天前 - 快照</div>
<div class="t h" style="left:640px;top:635px"><i>178</i>游戏数据库_首页</div>
<div class="t" style="left:640px;top:642px"><span style="color:#e33">178</span>游戏数据库，致力于建设教全、最新、最权威、最适应玩家使用体验的游戏数据库，目前主</div>
<div class="t" style="left:640px;top:649px">要产品包含魔兽世界随家类数据库、剑侠情缘3数据库、诛仙3数据库、永恒之塔数据...</div>
<div class="t g" style="left:640px;top:656px">178游戏数据库 - db.178.com/ - 1天前 - 快照</div>
<div class="t" style="left:597px;top:676px;font-size:5px;color:#222">https://www.sogou.com/tx?ie=utf-8&amp;query=178&amp;hdq=sogou-brse-021f6dd88a11ca48</div>
<div class="t" style="left:962px;top:676px;font-size:5px;color:#222">1/2</div>

<!-- right column -->
<div class="t s" style="left:850px;top:186px">热门游戏推荐</div><div class="t k" style="left:905px;top:186px">更多热门游戏&gt;&gt;</div>
<div class="a" style="left:850px;top:192px;width:27px;height:27px;background:linear-gradient(160deg,#5a3a20,#c9a070 40%,#a0301a 70%,#3a2a18)"></div>
<div class="a" style="left:886px;top:192px;width:27px;height:27px;background:linear-gradient(160deg,#1a2a38,#a08468 45%,#5a2a14 75%,#1a2a34)"></div>
<div class="t k" style="left:854px;top:221px">传奇霸主2</div><div class="t k" style="left:891px;top:221px">秦殇重生</div>
<div class="a" style="left:850px;top:228px;width:27px;height:26px;background:linear-gradient(160deg,#0c1a28,#b08860 50%,#6a3010 78%,#101820)"></div>
<div class="a" style="left:886px;top:228px;width:27px;height:26px;background:linear-gradient(150deg,#0a1038,#2a2a80 40%,#c090c0 55%,#101440)"></div>
<div class="t k" style="left:851px;top:256px">奇迹重生onli</div><div class="t k" style="left:889px;top:256px">贪玩传世ii</div><div class="t k" style="left:860px;top:262px">ne</div>

<div class="t s" style="left:850px;top:279px">相关网站</div><div class="t k" style="left:923px;top:279px">展开</div>
<div class="a" style="left:850px;top:284px;width:27px;height:27px;background:linear-gradient(#f5f5f5 25%,#12180e 25%,#2a3a1e 75%,#f5f5f5 75%)"></div>
<div class="a" style="left:880px;top:284px;width:28px;height:27px;background:#fafafa"></div>
<div class="t" style="left:881px;top:297px;font-size:5px;color:#c0245a;font-weight:bold">多玩游戏</div>
<div class="a" style="left:910px;top:284px;width:27px;height:27px;background:linear-gradient(#f0b020,#e05010 60%,#c82010);border-radius:3px"></div>
<div class="t k" style="left:858px;top:316px">nga</div><div class="t k" style="left:889px;top:316px">多玩</div><div class="t k" style="left:916px;top:316px">游侠网</div>
<div class="t" style="left:857px;top:321px">游戏论坛</div><div class="t" style="left:881px;top:321px">多玩游戏 多玩</div><div class="t" style="left:910px;top:321px">电脑游戏社区</div>
<div class="t" style="left:889px;top:328px">图库</div><div class="t" style="left:918px;top:328px">网站</div>
<div class="a" style="left:851px;top:335px;width:26px;height:26px;background:linear-gradient(#1a1a1a 35%,#b03018 35%,#b03018 55%,#1a1a1a 55%)"></div>
<div class="a" style="left:880px;top:335px;width:27px;height:26px;background:radial-gradient(circle,#2a9ad0 0,#0a3a60 45%,#050a14 70%)"></div>
<div class="a" style="left:910px;top:335px;width:27px;height:26px;background:linear-gradient(#c8a880 40%,#f8f8f8 40%,#f8f8f8 60%,#222 60%,#222 85%,#f8f8f8 85%)"></div>
<div class="t k" style="left:856px;top:365px">游民星空</div><div class="t k" style="left:888px;top:365px">战网</div><div class="t k" style="left:917px;top:365px">掘网狗</div>
<div class="t" style="left:851px;top:371px">单机游戏娱乐</div><div class="t" style="left:880px;top:371px">游戏对战平台</div><div class="t" style="left:910px;top:371px">第三方游戏投</div>
<div class="t" style="left:858px;top:377px">媒体</div><div class="t" style="left:917px;top:377px">资平台</div>

<div class="t s" style="left:850px;top:394px">相关游戏</div><div class="t k" style="left:923px;top:394px">展开</div>
<div class="a" style="left:851px;top:403px;width:26px;height:20px;background:linear-gradient(#fafafa 25%,#c8a868 40%,#b08848 65%,#fafafa 80%)"></div>
<div class="a" style="left:880px;top:399px;width:27px;height:27px;background:linear-gradient(#18200f,#3a4a22 50%,#1a1f10)"></div>
<div class="t" style="left:910px;top:415px;font-size:5px;color:#888">DOTA 2</div>
<div class="a" style="left:917px;top:401px;width:10px;height:10px;background:#c8322a"></div>
<div class="t k" style="left:857px;top:431px">三国杀</div><div class="t k" style="left:881px;top:431px">艾泽拉斯国家</div><div class="t k" style="left:915px;top:431px">dota2</div>
<div class="t" style="left:851px;top:436px">风靡全国的桌</div><div class="t k" style="left:889px;top:436px">地理</div><div class="t" style="left:910px;top:436px">游戏业国电子</div>
<div class="t" style="left:859px;top:443px">游</div><div class="t" style="left:881px;top:443px">魔兽世界华语</div><div class="t" style="left:915px;top:443px">竞技大作</div>
<div class="t" style="left:887px;top:449px">方论坛</div>
<div class="t" style="left:928px;top:457px">收起</div>

<div class="t s" style="left:850px;top:474px"><span style="color:#e33">新闻</span>热搜榜-今日热点</div>
<div class="a" style="left:850px;top:480px;width:81px;height:1px;background:#eee"></div>
<div class="t k" style="left:859px;top:485px">特朗普被弹劾调查</div>
<div class="t k" style="left:859px;top:497px">日本小哥确认跑失</div>
<div class="t k" style="left:859px;top:508px">方便面抢iPhone11</div>
<div class="t k" style="left:859px;top:519px">昭实双氧人员上演</div>
<div class="t k" style="left:859px;top:531px">嫌犯开飞机保全门</div>
<div class="t k" style="left:859px;top:542px">曾用class早留华为</div>
<div class="t k" style="left:859px;top:553px">中国人均预期寿命</div>
<div class="t k" style="left:859px;top:565px">这些词查页同作者</div>
<div class="t k" style="left:859px;top:576px">千名学生夜晚随迪</div>
<div class="t k" style="left:859px;top:587px">汉语词典App收费</div>
<div class="t" style="left:852px;top:485px">1</div><div class="t" style="left:852px;top:497px">2</div><div class="t" style="left:852px;top:508px">3</div><div class="t" style="left:852px;top:519px">4</div><div class="t" style="left:852px;top:531px">5</div><div class="t" style="left:852px;top:542px">6</div><div class="t" style="left:852px;top:553px">7</div><div class="t" style="left:852px;top:565px">8</div><div class="t" style="left:852px;top:576px">9</div><div class="t" style="left:851px;top:587px">10</div>
</div>
</body></html>
